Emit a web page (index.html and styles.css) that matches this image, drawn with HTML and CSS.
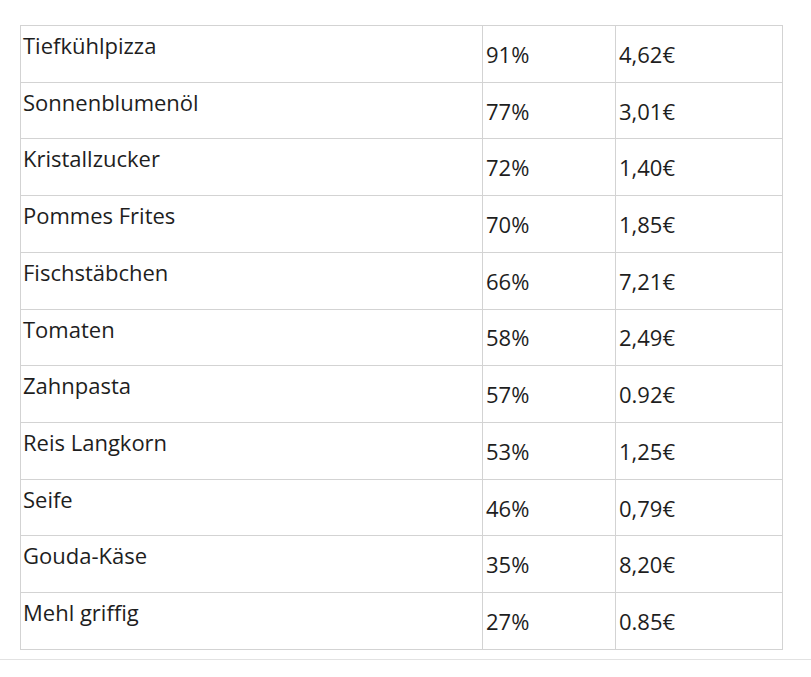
FILE: index.html
```html
<!DOCTYPE html>
<html lang="de">
<head>
<meta charset="utf-8">
<title>Preise</title>
<link rel="stylesheet" href="styles.css">
</head>
<body>
<div class="page">
  <table class="prices">
    <colgroup>
      <col class="c-name">
      <col class="c-pct">
      <col class="c-price">
    </colgroup>
    <tbody>
      <tr><td>Tiefkühlpizza</td><td>91%</td><td>4,62€</td></tr>
      <tr><td>Sonnenblumenöl</td><td>77%</td><td>3,01€</td></tr>
      <tr><td>Kristallzucker</td><td>72%</td><td>1,40€</td></tr>
      <tr><td>Pommes Frites</td><td>70%</td><td>1,85€</td></tr>
      <tr><td>Fischstäbchen</td><td>66%</td><td>7,21€</td></tr>
      <tr><td>Tomaten</td><td>58%</td><td>2,49€</td></tr>
      <tr><td>Zahnpasta</td><td>57%</td><td>0.92€</td></tr>
      <tr><td>Reis Langkorn</td><td>53%</td><td>1,25€</td></tr>
      <tr><td>Seife</td><td>46%</td><td>0,79€</td></tr>
      <tr><td>Gouda-Käse</td><td>35%</td><td>8,20€</td></tr>
      <tr><td>Mehl griffig</td><td>27%</td><td>0.85€</td></tr>
    </tbody>
  </table>
  <div class="rule"></div>
</div>
</body>
</html>
```

FILE: styles.css
```css
html, body {
  margin: 0;
  padding: 0;
  background: #ffffff;
}

.page {
  padding-top: 25px;
  font-family: "Open Sans", "Liberation Sans", sans-serif;
  color: #1e1e1e;
}

.prices {
  margin-left: 20px;
  width: 762px;
  border-collapse: collapse;
  table-layout: fixed;
  font-size: 22px;
  line-height: 30px;
}

.c-name { width: 462px; }
.c-pct { width: 133px; }
.c-price { width: 167px; }

.prices td {
  border: 1px solid #d3d3d3;
  height: 56.73px;
  padding: 0 0 0 3px;
  vertical-align: middle;
  box-sizing: border-box;
}

.prices td:first-child {
  vertical-align: top;
  padding-top: 4px;
  padding-left: 2px;
}

.rule {
  margin-top: 9px;
  height: 0;
  border-top: 1px solid #e2e2e2;
}
```
